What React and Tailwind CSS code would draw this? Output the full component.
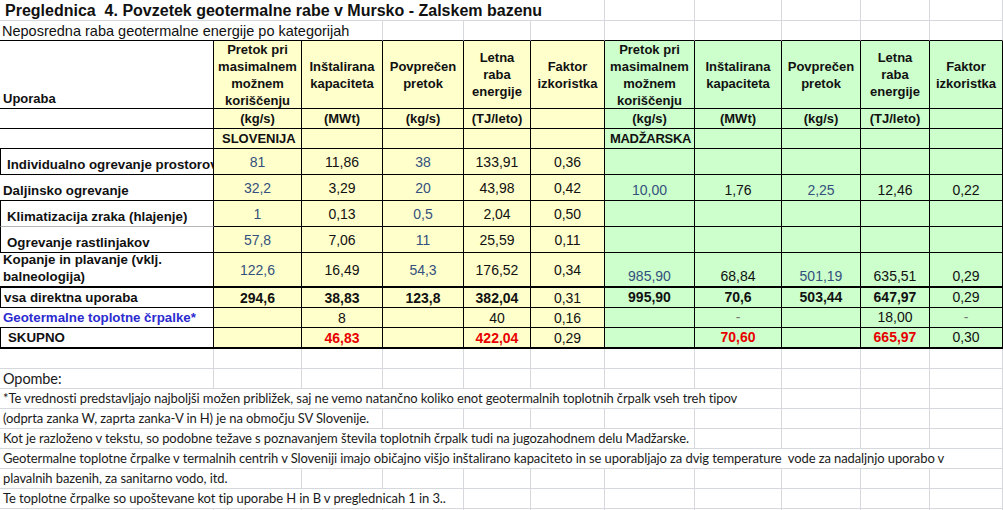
import React from 'react';

const GL = 'border-[#d5d9de]';
const YEL = 'bg-[#ffffcc]';
const GRN = 'bg-[#ccffcc]';
const BLUE = 'text-[#34507c]';
const RED = 'text-[#e80000] font-bold';
const BOLD = 'font-bold';

const Blank = ({ dark }) => (
  <div className={`border-r border-b ${GL} ${dark ? 'border-b-black' : ''}`} />
);

const Blanks = ({ n, dark }) => (
  <>
    {Array.from({ length: n }).map((_, i) => (
      <Blank key={i} dark={dark} />
    ))}
  </>
);

const rows = [
  {
    label: 'Individualno ogrevanje prostorov', a: 'border-l border-l-black pl-[6px]',
    slo: [['81', BLUE], ['11,86'], ['38', BLUE], ['133,91'], ['0,36']], hu: [],
  },
  {
    label: 'Daljinsko ogrevanje', a: 'pl-[3px]',
    slo: [['32,2', BLUE], ['3,29'], ['20', BLUE], ['43,98'], ['0,42']],
    hu: [['10,00', BLUE], ['1,76'], ['2,25', BLUE], ['12,46'], ['0,22']],
  },
  {
    label: 'Klimatizacija zraka (hlajenje)', a: 'border-l border-l-black pl-[6px]', ab: 'border-b-[#b5b5b5]',
    slo: [['1', BLUE], ['0,13'], ['0,5', BLUE], ['2,04'], ['0,50']], hu: [],
  },
  {
    label: 'Ogrevanje rastlinjakov', a: 'border-l border-l-black pl-[6px]',
    slo: [['57,8', BLUE], ['7,06'], ['11', BLUE], ['25,59'], ['0,11']], hu: [],
  },
  {
    label: 'Kopanje in plavanje (vklj.|balneologija)', a: 'pl-[3px]', bb: 'border-b-2',
    slo: [['122,6', BLUE], ['16,49'], ['54,3', BLUE], ['176,52'], ['0,34']],
    hu: [['985,90', BLUE], ['68,84'], ['501,19', BLUE], ['635,51'], ['0,29']],
  },
  {
    label: 'vsa direktna uporaba', a: 'border-l border-l-black pl-[3px]',
    slo: [['294,6', BOLD], ['38,83', BOLD], ['123,8', BOLD], ['382,04', BOLD], ['0,31']],
    hu: [['995,90', BOLD], ['70,6', BOLD], ['503,44', BOLD], ['647,97', BOLD], ['0,29']],
  },
  {
    label: 'Geotermalne toplotne črpalke*', a: 'pl-[3px] text-[#2b2bd0]',
    slo: [[''], ['8'], [''], ['40'], ['0,16']],
    hu: [[''], ['-', 'text-[#777]'], [''], ['18,00'], ['-', 'text-[#777]']],
  },
  {
    label: 'SKUPNO', a: 'border-l border-l-black pl-[7px] text-[11px]', bb: 'border-b-2',
    slo: [[''], ['46,83', RED], [''], ['422,04', RED], ['0,29']],
    hu: [[''], ['70,60', RED], [''], ['665,97', RED], ['0,30']],
  },
];

const head = ['Pretok pri|masimalnem|možnem|koriščenju', 'Inštalirana|kapaciteta', 'Povprečen|pretok', 'Letna|raba|energije', 'Faktor|izkoristka'];
const units = ['(kg/s)', '(MWt)', '(kg/s)', '(TJ/leto)', ''];

const notes = [
  ['Opombe:', 'col-span-1 text-[14.5px]'],
  ['*Te vrednosti predstavljajo najboljši možen približek, saj ne vemo natančno koliko enot geotermalnih toplotnih črpalk vseh treh tipov', 'col-span-8 text-[13px]'],
  ['(odprta zanka W, zaprta zanka-V in H) je na območju SV Slovenije.', 'col-span-3 text-[13px]'],
  ['Kot je razloženo v tekstu, so podobne težave s poznavanjem števila toplotnih črpalk tudi na jugozahodnem delu Madžarske.', 'col-span-7 text-[13px]'],
  ['Geotermalne toplotne črpalke v termalnih centrih v Sloveniji imajo običajno višjo inštalirano kapaciteto in se uporabljajo za dvig temperature  vode za nadaljnjo uporabo v', 'col-span-11 text-[13px]'],
  ['plavalnih bazenih, za sanitarno vodo, itd.', 'col-span-2 text-[13px]'],
  ['Te toplotne črpalke so upoštevane kot tip uporabe H in B v preglednicah 1 in 3..', 'col-span-4 text-[13px]'],
];
const noteSpan = [1, 8, 3, 7, 11, 2, 4];

export default function App() {
  return (
    <div className="w-[1003px] h-[510px] overflow-hidden bg-white font-['Liberation_Sans',Arial,sans-serif] text-[#111]">
      <div className="grid grid-cols-[214px_88px_81px_81px_67px_74px_90px_87px_79px_69px_73px] grid-rows-[21px_20px_68px_20px_20px_26px_26px_26px_26px_35px_20px_20px_21px_20px_20px_20px_20px_20px_20px_20px_20px_20px]">
        {/* title rows */}
        <div className={`col-span-6 border-r border-b ${GL} flex items-end pl-[5px] whitespace-pre text-[16px] font-bold leading-[19px]`}>
          Preglednica  4. Povzetek geotermalne rabe v Mursko - Zalskem bazenu
        </div>
        <Blanks n={5} />
        <div className={`col-span-3 border-r border-b ${GL} border-b-black flex items-end pl-[2px] whitespace-nowrap text-[14.5px] leading-[17px]`}>
          Neposredna raba geotermalne energije po kategorijah
        </div>
        <Blanks n={8} dark />

        {/* header */}
        <div className="border-r border-b border-black flex items-end pl-[3px] pb-[1px] text-[13px] font-bold leading-[17px]">Uporaba</div>
        {[YEL, GRN].map((bg) =>
          head.map((h, i) => (
            <div key={bg + i} className={`${bg} border-r border-b border-black flex items-center justify-center text-center text-[13px] font-bold leading-[17px]`}>
              <div>
                {h.split('|').map((l) => (
                  <div key={l}>{l}</div>
                ))}
              </div>
            </div>
          ))
        )}

        {/* units */}
        <div className="border-r border-b border-black" />
        {[YEL, GRN].map((bg) =>
          units.map((u, i) => (
            <div key={bg + i} className={`${bg} border-r border-b border-black flex items-center justify-center text-[13px] font-bold`}>{u}</div>
          ))
        )}

        {/* country row */}
        <div className="border-r border-b border-black" />
        <div className={`${YEL} border-r border-b border-black flex items-center pl-[8px] text-[13px] font-bold`}>SLOVENIJA</div>
        <div className={`${YEL} border-r border-b border-black`} />
        <div className={`${YEL} border-r border-b border-black`} />
        <div className={`${YEL} border-r border-b border-black`} />
        <div className={`${YEL} border-r border-b border-black`} />
        <div className={`${GRN} border-r border-b border-black flex items-center pl-[5px] text-[13px] font-bold tracking-[-0.3px] whitespace-nowrap`}>MADŽARSKA</div>
        <div className={`${GRN} border-r border-b border-black`} />
        <div className={`${GRN} border-r border-b border-black`} />
        <div className={`${GRN} border-r border-b border-black`} />
        <div className={`${GRN} border-r border-b border-black`} />

        {/* data */}
        {rows.map((r) => {
          const bb = r.bb || 'border-b';
          const hu = r.hu.length ? r.hu : [[''], [''], [''], [''], ['']];
          return (
            <React.Fragment key={r.label}>
              <div className={`border-r ${bb} border-black ${r.ab || ''} ${r.a} flex items-end pb-[1px] overflow-hidden whitespace-nowrap text-[13.3px] font-bold leading-[17px]`}>
                <div>
                  {r.label.split('|').map((l) => (
                    <div key={l}>{l}</div>
                  ))}
                </div>
              </div>
              {r.slo.map(([v, c = ''], i) => (
                <div key={'s' + i} className={`${YEL} border-r ${bb} border-black flex items-center justify-center text-[14px] leading-[16px] ${c}`}>{v}</div>
              ))}
              {hu.map(([v, c = ''], i) => (
                <div key={'h' + i} className={`${GRN} border-r ${bb} border-black flex items-end justify-center pb-[2px] text-[14px] leading-[16px] ${c}`}>{v}</div>
              ))}
            </React.Fragment>
          );
        })}

        {/* empty row */}
        <Blanks n={11} />

        {/* notes */}
        {notes.map(([t, span], i) => (
          <React.Fragment key={i}>
            <div className={`${span} border-r border-b ${GL} flex items-end pl-[3px] pb-[1px] whitespace-pre font-['Lato',sans-serif] tracking-[-0.1px] leading-[17px] text-[#1a1a1a]`}>
              {t}
            </div>
            <Blanks n={11 - noteSpan[i]} />
          </React.Fragment>
        ))}
        <Blanks n={11} />
      </div>
    </div>
  );
}
